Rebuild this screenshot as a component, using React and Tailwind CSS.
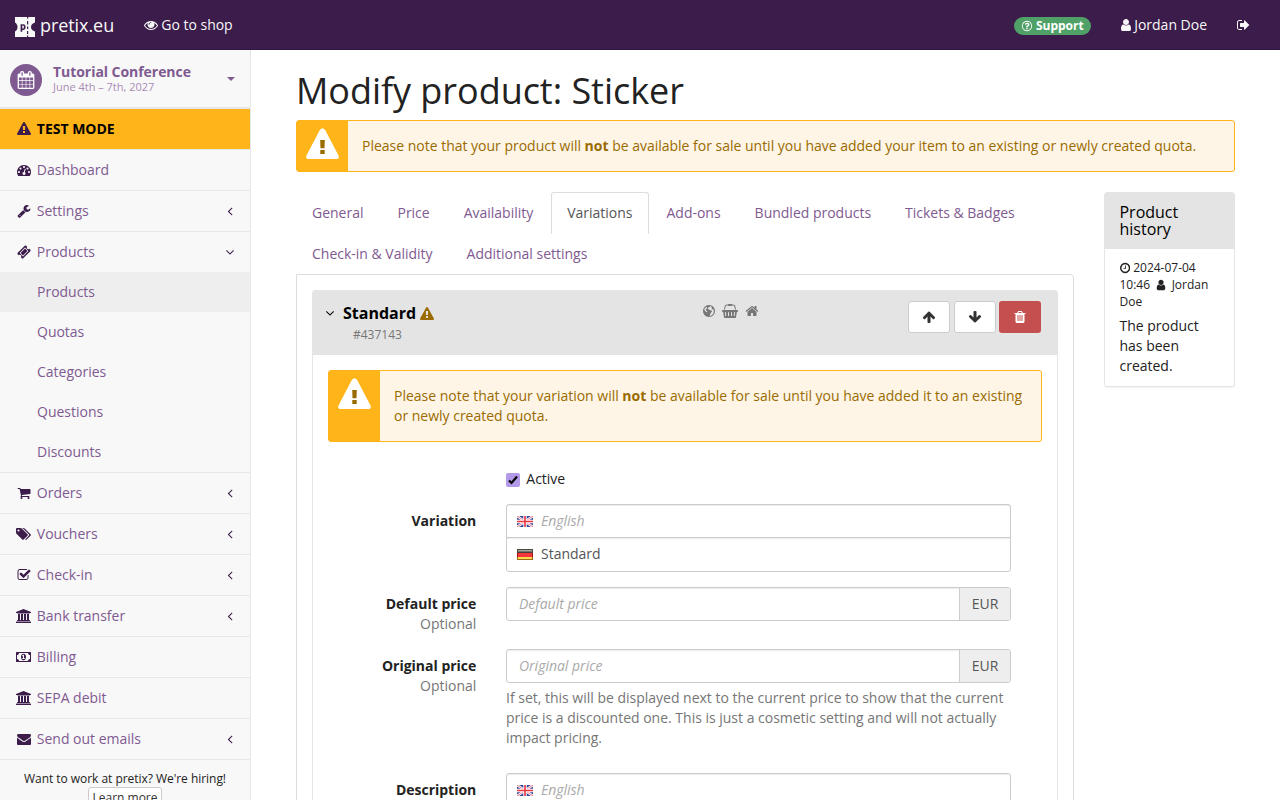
import React from "react";

const P = {
  warning:
    "M1024 1375v-190q0-14-9.5-23.5t-22.5-9.5h-192q-13 0-22.5 9.5t-9.5 23.5v190q0 14 9.5 23.5t22.5 9.5h192q13 0 22.5-9.5t9.5-23.5zm-2-374l18-459q0-12-10-19-13-11-24-11h-220q-11 0-24 11-10 7-10 21l17 457q0 10 10 16.5t24 6.5h185q14 0 23.5-6.5t10.5-16.5zm-14-934l768 1408q35 63-2 126-17 29-46.5 46t-63.5 17h-1536q-34 0-63.5-17t-46.5-46q-37-63-2-126l768-1408q17-31 47-49t65-18 65 18 47 49z",
  eye: "M1664 960q-152-236-381-353 61 104 61 225 0 185-131.5 316.5t-316.5 131.5-316.5-131.5-131.5-316.5q0-121 61-225-229 117-381 353 133 205 333.5 326.5t434.5 121.5 434.5-121.5 333.5-326.5zm-720-384q0-20-14-34t-34-14q-125 0-214.5 89.5t-89.5 214.5q0 20 14 34t34 14 34-14 14-34q0-86 61-147t147-61q20 0 34-14t14-34zm848 384q0 34-20 69-140 230-376.5 368.5t-499.5 138.5-499.5-139-376.5-368q-20-35-20-69t20-69q140-229 376.5-368t499.5-139 499.5 139 376.5 368q20 35 20 69z",
  user: "M1536 1399q0 109-62.5 187t-150.5 78h-854q-88 0-150.5-78t-62.5-187q0-85 8.5-160.5t31.5-152 58.5-131 94-89 134.5-34.5q131 128 313 128t313-128q76 0 134.5 34.5t94 89 58.5 131 31.5 152 8.5 160.5zm-256-887q0 159-112.5 271.5t-271.5 112.5-271.5-112.5-112.5-271.5 112.5-271.5 271.5-112.5 271.5 112.5 112.5 271.5z",
  signOut:
    "M704 1440q0 4 1 20t.5 26.5-3 23.5-10 19.5-20.5 6.5h-320q-119 0-203.5-84.5t-84.5-203.5v-704q0-119 84.5-203.5t203.5-84.5h320q13 0 22.5 9.5t9.5 22.5q0 4 1 20t.5 26.5-3 23.5-10 19.5-20.5 6.5h-320q-66 0-113 47t-47 113v704q0 66 47 113t113 47h312l11.5 1 11.5 3 8 5.5 7 9 2 13.5zm928-544q0 26-19 45l-544 544q-19 19-45 19t-45-19-19-45v-288h-448q-26 0-45-19t-19-45v-384q0-26 19-45t45-19h448v-288q0-26 19-45t45-19 45 19l544 544q19 19 19 45z",
  question:
    "M1008 1200v160q0 14-9 23t-23 9h-160q-14 0-23-9t-9-23v-160q0-14 9-23t23-9h160q14 0 23 9t9 23zm256-496q0 50-15 90t-45.5 69-52 44-59.5 36q-32 18-46.5 28t-26 24-11.5 29v32q0 14-9 23t-23 9h-160q-14 0-23-9t-9-23v-68q0-35 10.5-64.5t24-47.5 39-35.5 41-25.5 44.5-21q53-25 75-43t22-49q0-42-43.5-71.5t-95.5-29.5q-56 0-95 27-29 20-80 83-9 12-25 12-11 0-19-6l-108-82q-10-7-12-20t5-23q122-192 349-192 129 0 238.5 89.5t109.5 214.5zm-368-448q-130 0-248.5 51t-204 136.5-136.5 204-51 248.5 51 248.5 136.5 204 204 136.5 248.5 51 248.5-51 204-136.5 136.5-204 51-248.5-51-248.5-136.5-204-204-136.5-248.5-51zm768 640q0 209-103 385.5t-279.5 279.5-385.5 103-385.5-103-279.5-279.5-103-385.5 103-385.5 279.5-279.5 385.5-103 385.5 103 279.5 279.5 103 385.5z",
  calendar:
    "M192 1664h288v-288h-288v288zm352 0h320v-288h-320v288zm-352-352h288v-320h-288v320zm352 0h320v-320h-320v320zm-352-384h288v-288h-288v288zm736 736h320v-288h-320v288zm-384-736h320v-288h-320v288zm768 736h288v-288h-288v288zm-384-352h320v-320h-320v320zm-352-864v-288q0-13-9.5-22.5t-22.5-9.5h-64q-13 0-22.5 9.5t-9.5 22.5v288q0 13 9.5 22.5t22.5 9.5h64q13 0 22.5-9.5t9.5-22.5zm736 864h288v-320h-288v320zm-384-384h320v-288h-320v288zm384 0h288v-288h-288v288zm32-480v-288q0-13-9.5-22.5t-22.5-9.5h-64q-13 0-22.5 9.5t-9.5 22.5v288q0 13 9.5 22.5t22.5 9.5h64q13 0 22.5-9.5t9.5-22.5zm384-64v1280q0 52-38 90t-90 38h-1408q-52 0-90-38t-38-90v-1280q0-52 38-90t90-38h128v-96q0-66 47-113t113-47h64q66 0 113 47t47 113v96h384v-96q0-66 47-113t113-47h64q66 0 113 47t47 113v96h128q52 0 90 38t38 90z",
  dashboard:
    "M384 1152q0-53-37.5-90.5t-90.5-37.5-90.5 37.5-37.5 90.5 37.5 90.5 90.5 37.5 90.5-37.5 37.5-90.5zm192-448q0-53-37.5-90.5t-90.5-37.5-90.5 37.5-37.5 90.5 37.5 90.5 90.5 37.5 90.5-37.5 37.5-90.5zm428 481l101-382q6-26-7.5-48.5t-38.5-29.5-48 6.5-30 39.5l-101 382q-60 5-107 43.5t-63 98.5q-20 77 20 146t117 89 146-20 89-117q16-60-6-117t-72-91zm660-33q0-53-37.5-90.5t-90.5-37.5-90.5 37.5-37.5 90.5 37.5 90.5 90.5 37.5 90.5-37.5 37.5-90.5zm-640-640q0-53-37.5-90.5t-90.5-37.5-90.5 37.5-37.5 90.5 37.5 90.5 90.5 37.5 90.5-37.5 37.5-90.5zm448 192q0-53-37.5-90.5t-90.5-37.5-90.5 37.5-37.5 90.5 37.5 90.5 90.5 37.5 90.5-37.5 37.5-90.5zm320 448q0 261-141 483-19 29-54 29h-1402q-35 0-54-29-141-221-141-483 0-182 71-348t191-286 286-191 348-71 348 71 286 191 191 286 71 348z",
  wrench:
    "M448 1472q0-26-19-45t-45-19-45 19-19 45 19 45 45 19 45-19 19-45zm644-420l-682 682q-37 37-90 37-52 0-91-37l-106-108q-38-36-38-90 0-53 38-91l681-681q39 98 114.5 173.5t173.5 114.5zm634-435q0 39-23 106-47 134-164.5 217.5t-258.5 83.5q-185 0-316.5-131.5t-131.5-316.5 131.5-316.5 316.5-131.5q58 0 121.5 16.5t107.5 46.5q16 11 16 28t-16 28l-293 169v224l193 107q5-3 79-48.5t135.5-81 70.5-35.5q15 0 23.5 10t8.5 25z",
  ticket:
    "M1024 452l316 316-572 572-316-316zm-211 979l618-618q19-19 19-45t-19-45l-362-362q-18-18-45-18t-45 18l-618 618q-19 19-19 45t19 45l362 362q18 18 45 18t45-18zm889-637l-907 908q-37 37-90.5 37t-90.5-37l-126-126q56-56 56-136t-56-136-136-56-136 56l-125-126q-37-37-37-90.5t37-90.5l907-906q37-37 90.5-37t90.5 37l125 125q-56 56-56 136t56 136 136 56 136-56l126 125q37 37 37 90.5t-37 90.5z",
  cart: "M704 1536q0 52-38 90t-90 38-90-38-38-90 38-90 90-38 90 38 38 90zm896 0q0 52-38 90t-90 38-90-38-38-90 38-90 90-38 90 38 38 90zm128-1088v512q0 24-16.5 42.5t-40.5 21.5l-1044 122q13 60 13 70 0 16-24 64h920q26 0 45 19t19 45-19 45-45 19h-1024q-26 0-45-19t-19-45q0-11 8-31.5t16-36 21.5-40 15.5-29.5l-177-823h-204q-26 0-45-19t-19-45 19-45 45-19h256q16 0 28.5 6.5t19.5 15.5 13 24.5 8 26 5.5 29.5 4.5 26h1201q26 0 45 19t19 45z",
  tags: "M448 448q0-53-37.5-90.5t-90.5-37.5-90.5 37.5-37.5 90.5 37.5 90.5 90.5 37.5 90.5-37.5 37.5-90.5zm1067 576q0 53-37 90l-491 492q-39 37-91 37-53 0-90-37l-715-716q-38-37-64.5-101t-26.5-117v-416q0-52 38-90t90-38h416q53 0 117 26.5t102 64.5l715 714q37 39 37 91zm384 0q0 53-37 90l-491 492q-39 37-91 37-36 0-59-14t-53-45l470-470q37-37 37-90 0-52-37-91l-715-714q-38-38-102-64.5t-117-26.5h224q53 0 117 26.5t102 64.5l715 714q37 39 37 91z",
  check:
    "M1472 930v318q0 119-84.5 203.5t-203.5 84.5h-832q-119 0-203.5-84.5t-84.5-203.5v-832q0-119 84.5-203.5t203.5-84.5h832q63 0 117 25 15 7 18 23 3 17-9 29l-49 49q-10 10-23 10-3 0-9-2-23-6-45-6h-832q-66 0-113 47t-47 113v832q0 66 47 113t113 47h832q66 0 113-47t47-113v-254q0-13 9-22l64-64q10-10 23-10 6 0 12 3 20 8 20 29zm231-489l-814 814q-24 24-57 24t-57-24l-430-430q-24-24-24-57t24-57l110-110q24-24 57-24t57 24l263 263 647-647q24-24 57-24t57 24l110 110q24 24 24 57t-24 57z",
  bank: "M960 0l960 384v128h-128q0 26-20.500 45t-48.500 19h-1526q-28 0-48.500-19t-20.500-45h-128v-128zm-704 640h256v768h128v-768h256v768h128v-768h256v768h128v-768h256v768h59q28 0 48.500 19t20.500 45v64h-1664v-64q0-26 20.500-45t48.500-19h59v-768zm1595 960q28 0 48.500 19t20.500 45v128h-1920v-128q0-26 20.500-45t48.500-19h1782z",
  money:
    "M768 1152h384v-96h-128v-448h-114l-148 137 77 80q42-37 55-57h2v288h-128v96zm512-256q0 70-21 142t-59.500 134-101.500 101-138 39-138-39-101.500-101-59.500-134-21-142 21-142 59.500-134 101.500-101 138-39 138 39 101.500 101 59.500 134 21 142zm512 256v-512q-106 0-181-75t-75-181h-1152q0 106-75 181t-181 75v512q106 0 181 75t75 181h1152q0-106 75-181t181-75zm128-832v1152q0 26-19 45t-45 19h-1792q-26 0-45-19t-19-45v-1152q0-26 19-45t45-19h1792q26 0 45 19t19 45z",
  envelope:
    "M1792 710v794q0 66-47 113t-113 47h-1472q-66 0-113-47t-47-113v-794q44 49 101 87 362 246 497 345 57 42 92.5 65.500t94.500 48 110 24.500h2q51 0 110-24.500t94.500-48 92.500-65.500q170-123 498-345 57-39 100-87zm0-294q0 79-49 151t-122 123q-376 261-468 325-10 7-42.500 30.500t-54 38-52 32.500-57.500 27-50 9h-2q-23 0-50-9t-57.500-27-52-32.500-54-38-42.500-30.500q-91-64-262-182.500t-205-142.500q-62-42-117-115.500t-55-136.500q0-78 41.500-130t118.500-52h1472q65 0 112.500 47t47.500 113z",
  angleLeft:
    "M1203 544q0 13-10 23l-393 393 393 393q10 10 10 23t-10 23l-50 50q-10 10-23 10t-23-10l-466-466q-10-10-10-23t10-23l466-466q10-10 23-10t23 10l50 50q10 10 10 23z",
  angleDown:
    "M1395 736q0 13-10 23l-466 466q-10 10-23 10t-23-10l-466-466q-10-10-10-23t10-23l50-50q10-10 23-10t23 10l393 393 393-393q10-10 23-10t23 10l50 50q10 10 10 23z",
  globe:
    "M896 128q209 0 385.5 103t279.5 279.5 103 385.5-103 385.5-279.5 279.5-385.5 103-385.5-103-279.5-279.5-103-385.5 103-385.5 279.5-279.5 385.5-103zM1170 400L1250 340 1130 290 1010 250 990 300 1050 350 1000 400 920 380 850 430 760 480 700 560 800 620 870 700 960 760 1060 800 1180 790 1270 900 1240 1010 1130 1120 1060 1290 1000 1400 1010 1520 1180 1460 1330 1360 1440 1210 1500 1040 1510 860 1470 690 1400 640 1300 700 1200 640 1290 560 1270 470zM560 360L440 450 350 570 290 720 370 860 450 960 560 1010 650 1100 700 1010 620 900 500 840 450 760 520 700 590 560 640 470z",
  basket:
    "M1920 768q53 0 90.5 37.5t37.5 90.5-37.5 90.5-90.5 37.5h-15l-115 662q-8 46-44 76t-82 30h-1280q-46 0-82-30t-44-76l-115-662h-15q-53 0-90.5-37.5t-37.5-90.5 37.5-90.5 90.5-37.5h1792zm-1435 800q26-2 43.5-22.5t15.5-46.500l-32-416q-2-26-22.500-43.5t-46.500-15.500-43.5 22.500-15.500 46.500l32 416q2 25 20.500 42t43.500 17h5zm411-64v-416q0-26-19-45t-45-19-45 19-19 45v416q0 26 19 45t45 19 45-19 19-45zm384 0v-416q0-26-19-45t-45-19-45 19-19 45v416q0 26 19 45t45 19 45-19 19-45zm352 5l32-416q2-26-15.500-46.500t-43.500-22.500-46.500 15.500-22.500 43.5l-32 416q-2 26 15.500 46.500t43.500 22.500h5q25 0 43.500-17t20.500-42zm-1156-1217l-93 412h-132l101-441q19-88 89-143.500t160-55.500h167q0-26 19-45t45-19h384q26 0 45 19t19 45h167q90 0 160 55.500t89 143.5l101 441h-132l-93-412q-11-44-45.500-72t-79.500-28h-167q0 26-19 45t-45 19h-384q-26 0-45-19t-19-45h-167q-45 0-79.500 28t-45.500 72z",
  home: "M1472 992v480q0 26-19 45t-45 19h-384v-384h-256v384h-384q-26 0-45-19t-19-45v-480q0-1 .5-3t.5-3l575-474 575 474q1 2 1 6zm223-69l-62 74q-8 9-21 11h-3q-13 0-21-7l-692-577-692 577q-12 8-24 7-13-2-21-11l-62-74q-8-10-7-23.500t11-21.500l719-599q32-26 76-26t76 26l244 204v-195q0-14 9-23t23-9h192q14 0 23 9t9 23v408l219 182q10 8 11 21.500t-7 23.500z",
  arrowUp:
    "M1675 971q0 51-37 90l-75 75q-38 38-91 38-54 0-90-38l-294-293v704q0 52-37.500 84.500t-90.500 32.500h-128q-53 0-90.500-32.500t-37.500-84.500v-704l-294 293q-36 38-90 38t-90-38l-75-75q-38-38-38-90 0-53 38-91l651-651q35-37 90-37 54 0 91 37l651 651q37 39 37 91z",
  arrowDown:
    "M1675 832q0 53-37 90l-651 652q-39 37-91 37-53 0-90-37l-651-652q-38-36-38-90 0-53 38-91l74-75q39-37 91-37 53 0 90 37l294 294v-704q0-52 38-90t90-38h128q52 0 90 38t38 90v704l294-294q37-37 90-37 52 0 91 37l75 75q37 39 37 91z",
  trash:
    "M704 1376v-704q0-14-9-23t-23-9h-64q-14 0-23 9t-9 23v704q0 14 9 23t23 9h64q14 0 23-9t9-23zm256 0v-704q0-14-9-23t-23-9h-64q-14 0-23 9t-9 23v704q0 14 9 23t23 9h64q14 0 23-9t9-23zm256 0v-704q0-14-9-23t-23-9h-64q-14 0-23 9t-9 23v704q0 14 9 23t23 9h64q14 0 23-9t9-23zm-544-992h448l-48-117q-7-9-17-11h-317q-10 2-17 11zm928 32v64q0 14-9 23t-23 9h-96v948q0 83-47 143.5t-113 60.5h-832q-66 0-113-58.5t-47-141.500v-952h-96q-14 0-23-9t-9-23v-64q0-14 9-23t23-9h309l70-167q15-37 54-63t79-26h320q40 0 79 26t54 63l70 167h309q14 0 23 9t9 23z",
  clock:
    "M1024 544v448q0 14-9 23t-23 9h-320q-14 0-23-9t-9-23v-64q0-14 9-23t23-9h224v-352q0-14 9-23t23-9h64q14 0 23 9t9 23zm416 352q0-148-73-273t-198-198-273-73-273 73-198 198-73 273 73 273 198 198 273 73 273-73 198-198 73-273zm224 0q0 209-103 385.5t-279.5 279.5-385.5 103-385.5-103-279.5-279.5-103-385.5 103-385.5 279.5-279.5 385.5-103 385.5 103 279.5 279.5 103 385.5z",
};

// Glyphs share a 1792-unit em; the viewBox sets the horizontal crop.
function Icon({ name, box = "0 0 1792 1792", className = "h-[14px] w-[14px]" }) {
  return (
    <svg viewBox={box} className={"inline-block shrink-0 align-[-2px] " + className} fill="currentColor" fillRule={name === "globe" ? "evenodd" : "nonzero"}>
      <path d={P[name]} />
    </svg>
  );
}

function NavItem({ icon, box, iconClass, label, arrow }) {
  return (
    <a className="flex h-[41px] items-center border-b border-[#e7e7e7] px-[15px] text-[#7f5a91]">
      <span className="mr-[3.8px] flex w-[18px] justify-center text-[#3b1c4a]">
        <Icon name={icon} box={box} className={iconClass} />
      </span>
      <span className="grow">{label}</span>
      {arrow && (
        <span className="-mr-[2px] text-[#3b1c4a]">
          <Icon name={arrow} />
        </span>
      )}
    </a>
  );
}

function Alert({ children }) {
  return (
    <div className="flex rounded-[3px] border border-[#ffb419] bg-[#fff5e7] text-[#996b00]">
      <div className="w-[51px] shrink-0 bg-[#ffb419] pt-[7px] pl-[8.700px]">
        <svg viewBox="0 0 33 31" className="block h-[31px] w-[33px]">
          <path d="M16.500 .5C17.600 .5 18.600 1.100 19.200 2.100L32.500 27.500C33.500 29.400 32.400 31 30.400 31H2.600C.6 31-.5 29.400 .5 27.500L13.800 2.100C14.400 1.100 15.400 .5 16.500 .5Z" fill="#fff" />
          <path d="M14.200 12H18.800L18.500 20.200H14.500ZM14.300 22H18.700V26H14.300Z" fill="#996b00" />
        </svg>
      </div>
      <p className="py-[15px] pr-[15px] pl-[14px]">{children}</p>
    </div>
  );
}

function FlagEn() {
  return (
    <svg viewBox="0 0 16 11" className="h-[11px] w-[16px] shrink-0">
      <path d="M0 0H16V11H0Z" fill="#32479b" />
      <path d="M0 0L16 11M16 0L0 11" stroke="#fff" strokeWidth="2.4" />
      <path d="M0 0L16 11M16 0L0 11" stroke="#e8596a" strokeWidth="0.8" />
      <path d="M8 0V11M0 5.500H16" stroke="#fff" strokeWidth="3.4" />
      <path d="M8 0V11M0 5.500H16" stroke="#ea3340" strokeWidth="1.600" />
    </svg>
  );
}

function FlagDe() {
  return (
    <svg viewBox="0 0 16 11" className="h-[11px] w-[16px] shrink-0">
      <path d="M0 0H16V4H0Z" fill="#4b4b3f" />
      <path d="M1 1H15V2H1Z" fill="#a5a59f" />
      <path d="M1 2H15V3H1Z" fill="#77776f" />
      <path d="M1 3H15V4H1Z" fill="#4a3a38" />
      <path d="M0 4H16V8H0Z" fill="#a3131a" />
      <path d="M1 4H15V8H1Z" fill="#f2363c" />
      <path d="M0 8H16V11H0Z" fill="#9a6b14" />
      <path d="M1 8H15V10H1Z" fill="#ffd84d" />
    </svg>
  );
}

function Field({ label, optional, children, className = "" }) {
  return (
    <div className={"flex gap-[30px] " + className}>
      <div className="w-[148.300px] shrink-0 pt-[7px] text-right">
        <div className="font-bold">{label}</div>
        {optional && <div className="text-[#767676]">Optional</div>}
      </div>
      <div className="-ml-[0.300px] w-[505px]">{children}</div>
    </div>
  );
}

function PriceInput({ placeholder }) {
  return (
    <div className="flex h-[34px] overflow-hidden rounded-[3px] border border-[#ccc]">
      <div className="grow pt-[6px] pl-[12px] text-[#aaa] italic shadow-[inset_0_1px_1px_rgba(0,0,0,0.075)]">{placeholder}</div>
      <div className="w-[51px] border-l border-[#ccc] bg-[#eee] pt-[6px] text-center text-[#555]">EUR</div>
    </div>
  );
}

const tabs = ["General", "Price", "Availability", "Variations", "Add-ons", "Bundled products", "Tickets & Badges", "Check-in & Validity", "Additional settings"];

const WIDE = "0 0 1920 1792";

export default function App() {
  return (
    <div className="h-[800px] w-[1280px] overflow-hidden bg-white font-['Open_Sans',sans-serif] text-[14px] leading-[20px] tracking-[-0.009px] text-[#222]">
      <header className="flex h-[50px] items-center border-b border-[#2f163b] bg-[#3b1c4a] text-[#f8f8f8]">
        <div className="flex items-center pl-[15px] text-[18px]">
          <svg viewBox="0 0 20 20" className="mt-[4px] h-[20px] w-[20px]">
            <path
              fill="#f8f8f8"
              fillRule="evenodd"
              d="M0 0H12V1.500H13.200V0H20V5.500C17.500 6.200 16 7.800 16 10C16 12.200 17.500 13.800 20 14.500V20H13.200V18.500H12V20H0V14.500C1.600 13.500 2.500 12 2.500 10C2.500 8 1.600 6.500 0 5.500ZM12 4V7.500H13.200V4ZM12 9.500V12H13.200V9.500ZM12 14V17H13.200V14ZM5.600 7.200V14.800H7.300V12.900C9.600 13.300 10.600 11.900 10.600 10C10.600 7.900 9.400 6.700 7.300 7.400L7.100 7.200ZM7.300 8.800C8.500 8.300 8.900 8.900 8.900 10C8.900 11.200 8.400 11.800 7.300 11.500Z"
            />
          </svg>
          <span className="ml-[5px] tracking-[-0.07px]">pretix.eu</span>
        </div>
        <div className="ml-[29.500px]">
          <Icon name="eye" /> Go to shop
        </div>
        <div className="mt-[2px] ml-auto flex h-[18px] items-center rounded-full bg-[#50a167] pr-[7.500px] pl-[7px] text-[12px] font-bold text-white">
          <Icon name="question" className="mr-[2.500px] h-[12px] w-[12px]" />
          Support
        </div>
        <div className="ml-[30px]">
          <Icon name="user" box="256 0 1280 1792" className="-mr-[0.600px] h-[14px] w-[10px]" /> Jordan Doe
        </div>
        <div className="mr-[30px] ml-[30px]">
          <Icon name="signOut" box="64 0 1664 1792" className="h-[14px] w-[13px]" />
        </div>
      </header>

      <div className="flex h-[750px]">
        <aside className="w-[251px] shrink-0 overflow-hidden border-r border-[#e7e7e7] bg-[#f8f8f8]">
          <div className="flex h-[59px] items-center border-b-2 border-[#e7e7e7] pl-[10px]">
            <div className="mt-[2px] flex h-[32px] w-[32px] items-center justify-center rounded-full bg-[#7f5a91] text-white">
              <Icon name="calendar" className="h-[18px] w-[18px]" />
            </div>
            <div className="ml-[11px] grow">
              <div className="text-[14px] leading-[17px] font-bold tracking-[-0.05px] text-[#7f5a91]">Tutorial Conference</div>
              <div className="text-[11px] leading-[14px] text-[#a88cb6]">June 4th – 7th, 2027</div>
            </div>
            <svg viewBox="0 0 8 4" className="mr-[15px] h-[4px] w-[8px] text-[#7f5a91]">
              <path d="M0 0H8L4 4Z" fill="currentColor" />
            </svg>
          </div>
          <div className="flex h-[41px] items-center border-b border-[#e7e7e7] bg-[#ffb419] px-[15px] font-bold text-black">
            <span className="mr-[3.8px] flex w-[18px] justify-center text-[#3b1c4a]">
              <Icon name="warning" />
            </span>
            TEST MODE
          </div>
          <NavItem icon="dashboard" label="Dashboard" />
          <NavItem icon="wrench" label="Settings" arrow="angleLeft" />
          <div className="border-b border-[#e7e7e7]">
            <a className="flex h-[40px] items-center px-[15px] text-[#7f5a91]">
              <span className="mr-[3.8px] flex w-[18px] justify-center text-[#3b1c4a]">
                <Icon name="ticket" />
              </span>
              <span className="grow">Products</span>
              <span className="-mr-[2px] text-[#3b1c4a]">
                <Icon name="angleDown" />
              </span>
            </a>
            {["Products", "Quotas", "Categories", "Questions", "Discounts"].map((s, i) => (
              <a key={s} className={"flex h-[40px] items-center pl-[37px] text-[#7f5a91] " + (i === 0 ? "bg-[#eeeeee]" : "")}>
                {s}
              </a>
            ))}
          </div>
          <NavItem icon="cart" label="Orders" arrow="angleLeft" />
          <NavItem icon="tags" box={WIDE} iconClass="mr-px h-[14px] w-[15px]" label="Vouchers" arrow="angleLeft" />
          <NavItem icon="check" label="Check-in" arrow="angleLeft" />
          <NavItem icon="bank" box={WIDE} iconClass="mr-px h-[14px] w-[15px]" label="Bank transfer" arrow="angleLeft" />
          <NavItem icon="money" box={WIDE} iconClass="mr-px h-[14px] w-[15px]" label="Billing" />
          <NavItem icon="bank" box={WIDE} iconClass="mr-px h-[14px] w-[15px]" label="SEPA debit" />
          <NavItem icon="envelope" label="Send out emails" arrow="angleLeft" />
          <div className="flex flex-col items-center pt-[10px] text-[12px] leading-[17px]">
            <span className="tracking-[-0.04px]">Want to work at pretix? We're hiring!</span>
            <span className="rounded-[3px] border border-[#ccc] bg-white px-[4px] py-[1px] leading-[18px] text-[#333]">Learn more</span>
          </div>
        </aside>

        <main className="w-[1029px] pr-[45px] pl-[45px]">
          <h1 className="mt-[21px] h-[49px] text-[36px] leading-[40px] tracking-[-0.04px]">Modify product: Sticker</h1>
          <Alert>
            Please note that your product will <strong>not</strong> be available for sale until you have added your item to an existing or newly created quota.
          </Alert>
          <div className="mt-[20px] flex items-start gap-[30px]">
            <div className="w-[777.5px]">
              <ul className="flex flex-wrap">
                {tabs.map((t) => (
                  <li
                    key={t}
                    className={
                      "mr-[2px] -mb-px h-[42px] rounded-t-[3px] border px-[15px] py-[10px] " +
                      (t === "Variations" ? "border-[#ddd] border-b-transparent bg-white text-[#555]" : "border-transparent text-[#7f5a91]")
                    }
                  >
                    {t}
                  </li>
                ))}
              </ul>
              <div className="h-[600px] rounded-tr-[4px] border border-[#ddd] p-[15px]">
                <section className="h-[600px] rounded-[3px] border border-[#e4e4e4] shadow-[0_1px_1px_rgba(0,0,0,0.05)]">
                  <div className="flex h-[64px] items-start bg-[#e4e4e4] pr-[15.500px] pl-[10px] text-black">
                    <Icon name="angleDown" className="mt-[15px] h-[14px] w-[14px]" />
                    <div className="ml-[6px] w-[356px] pt-[12px]">
                      <div className="text-[16px] font-bold">
                        Standard <Icon name="warning" className="h-[14px] w-[14px] text-[#996b00]" />
                      </div>
                      <div className="pt-[2px] pl-[10px] text-[12px] text-[#767676]">#437143</div>
                    </div>
                    <div className="flex gap-[7px] pt-[13px] pl-[4px] text-[#767676]">
                      <Icon name="globe" box="128 0 1536 1792" className="h-[14px] w-[12px]" />
                      <Icon name="basket" box="0 0 2048 1792" className="h-[14px] w-[16px]" />
                      <Icon name="home" />
                    </div>
                    <div className="ml-auto flex pt-[10px] text-[#333]">
                      <span className="mr-[4px] flex h-[32px] w-[42px] items-center justify-center rounded-[3px] border border-[#ccc] bg-white">
                        <Icon name="arrowUp" />
                      </span>
                      <span className="mr-[3px] flex h-[32px] w-[42px] items-center justify-center rounded-[3px] border border-[#ccc] bg-white">
                        <Icon name="arrowDown" />
                      </span>
                      <span className="flex h-[32px] w-[42px] items-center justify-center rounded-[3px] bg-[#c44f4f] text-white">
                        <Icon name="trash" />
                      </span>
                    </div>
                  </div>
                  <div className="p-[15px]">
                    <Alert>
                      Please note that your variation will <strong>not</strong> be available for sale until you have added it to an existing or newly created quota.
                    </Alert>
                    <div className="mt-[27px] ml-[178px] flex items-center">
                      <svg viewBox="0 0 14 14" className="mt-[2px] mr-[6.300px] h-[14px] w-[14px]">
                        <rect width="14" height="14" rx="2" fill="#b399ea" />
                        <path d="M3 7.500L5.500 10L11 3.500" fill="none" stroke="#000" strokeWidth="2.200" />
                      </svg>
                      Active
                    </div>
                    <Field label="Variation" className="mt-[15px]">
                      <div className="rounded-[3px] border border-[#ccc]">
                        <div className="flex h-[33px] items-center border-b border-[#ccc] pl-[10px] text-[#aaa] italic shadow-[inset_0_1px_1px_rgba(0,0,0,0.075)]">
                          <FlagEn />
                          <span className="ml-[8px]">English</span>
                        </div>
                        <div className="flex h-[33px] items-center pb-px pl-[10px] text-[#555] shadow-[inset_0_1px_1px_rgba(0,0,0,0.075)]">
                          <FlagDe />
                          <span className="ml-[8px]">Standard</span>
                        </div>
                      </div>
                    </Field>
                    <Field label="Default price" optional className="mt-[15px]">
                      <PriceInput placeholder="Default price" />
                    </Field>
                    <Field label="Original price" optional className="mt-[15px]">
                      <PriceInput placeholder="Original price" />
                      <p className="mt-[5px] text-[#767676]">
                        If set, this will be displayed next to the current price to show that the current price is a discounted one. This is just a cosmetic setting and will not actually impact pricing.
                      </p>
                    </Field>
                    <Field label="Description" className="mt-[25px]">
                      <div className="flex h-[68px] items-start rounded-[3px] border border-[#ccc] pt-[6px] pl-[10px] text-[#aaa] italic shadow-[inset_0_1px_1px_rgba(0,0,0,0.075)]">
                        <span className="flex items-center">
                          <FlagEn />
                          <span className="ml-[8px]">English</span>
                        </span>
                      </div>
                    </Field>
                  </div>
                </section>
              </div>
            </div>
            <section className="w-[131.5px] rounded-[3px] border border-[#e4e4e4] shadow-[0_1px_1px_rgba(0,0,0,0.05)]">
              <h3 className="h-[56px] bg-[#e4e4e4] px-[15px] pt-[11px] text-[16px] leading-[17px] text-black">Product history</h3>
              <div className="p-[15px] pt-[10px] pb-[10px]">
                <p className="text-[12px] leading-[17px]">
                  <Icon name="clock" box="128 0 1536 1792" className="mr-[0.300px] h-[12px] w-[10.300px]" /> 2024-07-04 10:46{" "}
                  <Icon name="user" className="mx-[1.700px] h-[12px] w-[12px]" /> Jordan Doe
                </p>
                <p className="mt-[6px]">The product has been created.</p>
              </div>
            </section>
          </div>
        </main>
      </div>
    </div>
  );
}
